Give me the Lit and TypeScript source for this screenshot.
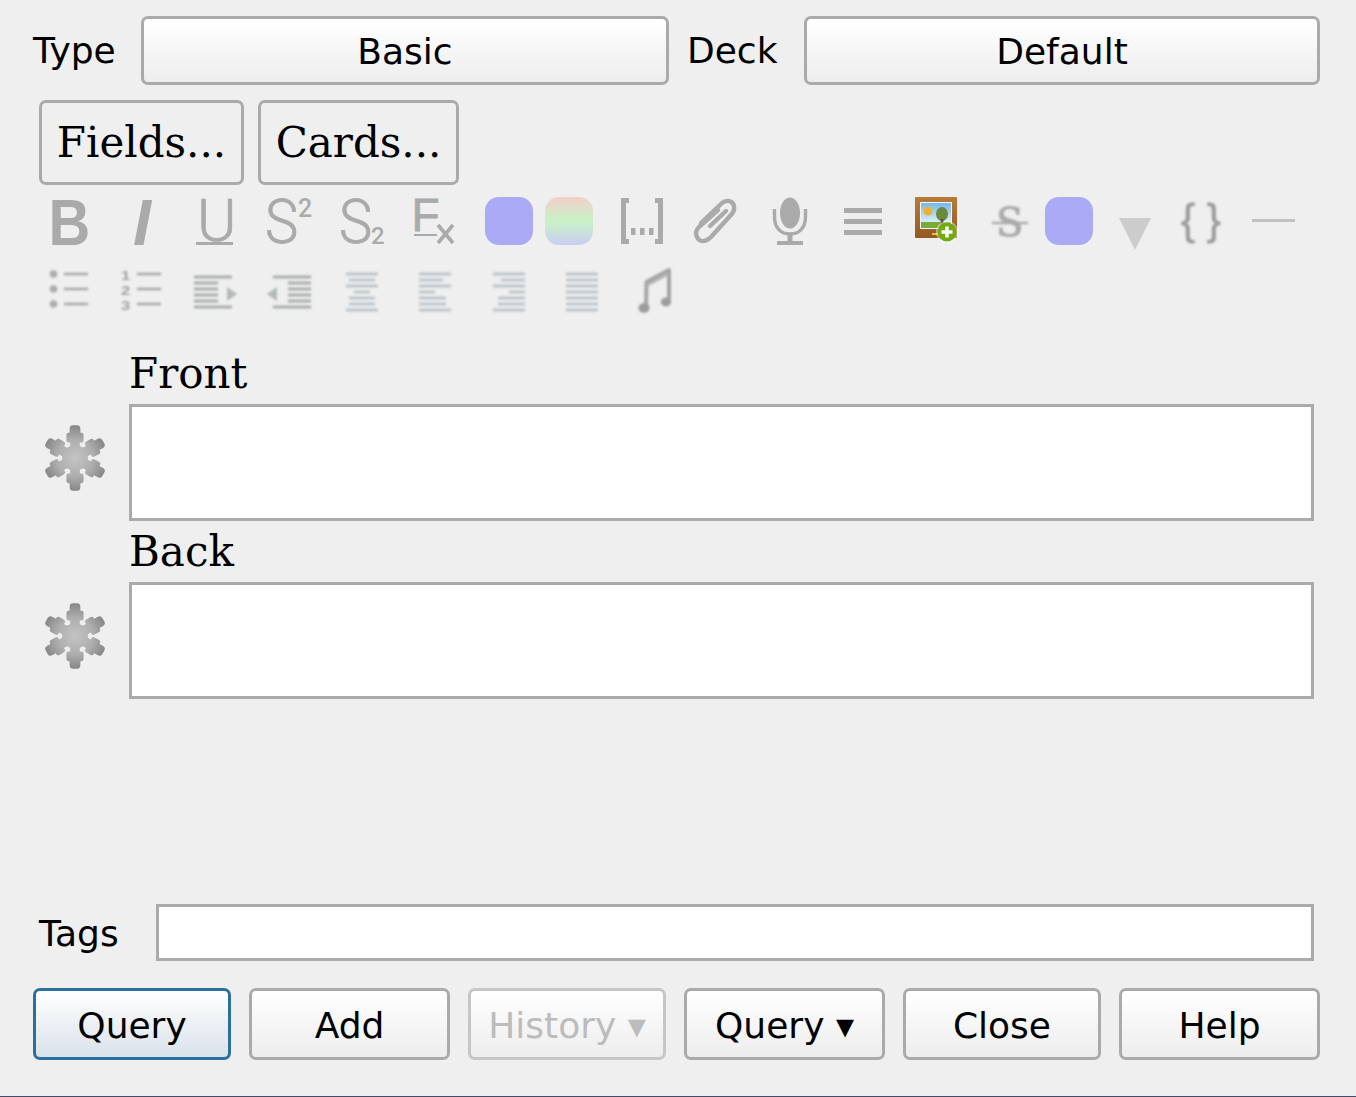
import { LitElement, html, css, svg } from "lit";
import { customElement } from "lit/decorators.js";

const lineRows = (rows: [number, number][], y0: number, step: number, sw = 3, color = "#bcc6cc") =>
  rows.map(([a, b], i) => svg`<line x1=${a} x2=${b} y1=${y0 + i * step} y2=${y0 + i * step} stroke=${color} stroke-width=${sw}/>`);

const glyph = (cls: string, x: number, y: number, t: string) => svg`<text class=${cls} x=${x} y=${y}>${t}</text>`;

const snowArm = (a: number) => svg`<path transform="rotate(${a} 32 32)" fill="url(#sf)"
  d="M27.5 32 V17.5 L25.5 17.5 Q24 17.5 24 15.5 V10.5 Q24 8.5 26 8.5 H27 V5 Q27 1.5 30 1.5 H34 Q37 1.5 37 5 V8.5 H38 Q40 8.5 40 10.5 V15.5 Q40 17.5 38.5 17.5 L36.5 17.5 V32Z"/>`;

const flake = html`<svg class="flake" width="64" height="68" viewBox="0 0 64 68">
  <defs><radialGradient id="sf" gradientUnits="userSpaceOnUse" cx="32" cy="32" r="31">
    <stop offset="0" stop-color="#c4c4c4"/><stop offset=".55" stop-color="#aeaeae"/><stop offset="1" stop-color="#858585"/></radialGradient></defs>
  <g transform="translate(32 34) scale(1.07) translate(-32 -32)" filter="blur(.7px)">
    <circle cx="32" cy="32" r="12" fill="url(#sf)"/>
    ${[0, 60, 120, 180, 240, 300].map(snowArm)}
  </g>
</svg>`;

type Tool = { cx: number; art: unknown; soft?: boolean };

const digit = (y: number, t: string) => svg`<text class="g num" transform="translate(3 ${y}) scale(1.3 1)">${t}</text>`;

const top: Tool[] = [
  { cx: 70, art: svg`<text class="g bold" transform="translate(2.5 48) scale(.89 1)">B</text>` },
  { cx: 143, art: glyph("g bolditalic", 14, 48, "I") },
  { cx: 216, art: svg`${glyph("g thin", 5, 44, "U")}<rect x="4" y="45" width="37" height="3" fill="#aaa"/>` },
  { cx: 289, art: svg`<text class="g thinS" transform="translate(0 46) scale(1 1.08)">S</text>${glyph("g sup", 33, 20, "2")}` },
  { cx: 362, art: svg`<text class="g thinS" transform="translate(1 46) scale(1 1.08)">S</text>${glyph("g sub", 33, 47, "2")}` },
  { cx: 434, art: svg`${glyph("g reg", 1.5, 34, "F")}<rect x="4" y="37" width="23" height="2" fill="#aaa"/>
    <path d="M28 28 L43 46 M43 28 L28 46" stroke="#aaa" stroke-width="3.6" fill="none"/>` },
  { cx: 509, art: svg`<rect width="48" height="48" rx="14" fill="#aaaaf5"/>` },
  { cx: 569, art: svg`<defs><linearGradient id="cg" x1="0" y1="0" x2="0" y2="1">
      <stop offset="0" stop-color="#f2cfcb"/><stop offset=".5" stop-color="#c9f2c6"/><stop offset="1" stop-color="#cacdf2"/></linearGradient></defs>
      <rect width="48" height="48" rx="14" fill="url(#cg)"/>` },
  { cx: 642, art: svg`<path d="M11 3.5 H5.5 V44.5 H11 M37 3.5 H42.5 V44.5 H37" stroke="#aaa" stroke-width="5" fill="none"/>
      <rect x="13" y="31" width="4.5" height="7" fill="#aaa"/><rect x="22" y="31" width="4.5" height="7" fill="#aaa"/><rect x="31" y="31" width="4.5" height="7" fill="#aaa"/>` },
  { cx: 715, art: svg`<path d="M10 25 L31 5 C36 1 42 3 43 8 C44 12 42 15 39 18 L20 39 C14 45 8 44 6 39 C4 35 5 32 8 29 L27 12 M35 13 L19 28" transform="translate(0 1)" stroke="#aaa" stroke-width="4.4" stroke-linecap="round" stroke-linejoin="round" fill="none"/>` },
  { cx: 790, art: svg`<ellipse cx="24" cy="16" rx="10" ry="15.5" fill="#aaa"/>
      <path d="M8.5 12 V20 C8.5 31 15 37 24 37 C33 37 39.5 31 39.5 20 V12" fill="none" stroke="#aaa" stroke-width="3.4"/>
      <rect x="21.5" y="37" width="5" height="7" fill="#aaa"/><rect x="11" y="44" width="26" height="4" fill="#aaa"/>` },
  { cx: 862, art: svg`<rect x="6" y="11" width="38" height="5" fill="#aaa"/><rect x="6" y="22" width="38" height="5" fill="#aaa"/><rect x="6" y="33" width="38" height="5" fill="#aaa"/>` },
  { cx: 936, art: svg`<defs><linearGradient id="sky" x1="0" y1="0" x2="0" y2="1"><stop offset="0" stop-color="#74b8ec"/><stop offset="1" stop-color="#d8eefa"/></linearGradient>
        <linearGradient id="wood" x1="0" y1="0" x2="0" y2="1"><stop offset="0" stop-color="#b77a38"/><stop offset="1" stop-color="#95591f"/></linearGradient></defs>
      <rect x="3" y="0" width="42" height="41" rx="1" fill="url(#wood)"/>
      <rect x="8" y="5" width="32" height="27" fill="#f2f6f8"/><rect x="9" y="6" width="30" height="19" fill="url(#sky)"/>
      <rect x="9" y="25" width="30" height="6" fill="#79ab3a"/>
      <circle cx="16" cy="14" r="4.6" fill="#f0b030"/><ellipse cx="30" cy="17" rx="6" ry="7" fill="#6a8a3c"/><rect x="28.8" y="22" width="2.6" height="7" fill="#6a4a2a"/>
      <rect x="20" y="36" width="7" height="2" fill="#e8c040"/>
      <circle cx="35" cy="35" r="11" fill="#fff" opacity=".45"/><circle cx="35" cy="35" r="9.5" fill="#72aa10"/>
      <path d="M35 29.5 V40.5 M29.5 35 H40.5" stroke="#fff" stroke-width="3.4"/>` },
  { cx: 1010, soft: true, art: svg`${glyph("g strike", 10, 39, "S")}<path d="M6 26 H42" stroke="#aaa" stroke-width="2.4"/>` },
  { cx: 1069, art: svg`<rect width="48" height="48" rx="14" fill="#aaaaf5"/>` },
  { cx: 1135, art: svg`<path d="M8 21 H40 L24 53Z" fill="#ccc"/>` },
  { cx: 1201, soft: true, art: svg`<text class="g brace" x="4" y="37">{ }</text>` },
  { cx: 1273, art: svg`<rect x="3" y="22" width="43" height="3" fill="#c2c2c2"/>` },
];

const soft = "#a9a9a9";
const bottom: Tool[] = [
  { cx: 69, soft: true, art: svg`${[6, 21, 36].map((y) => svg`<circle cx="8.5" cy=${y} r="3.8" fill="#adadad"/>`)}${lineRows([[19, 43], [19, 43], [19, 43]], 6, 15, 2.6, soft)}` },
  { cx: 142, soft: true, art: svg`${digit(12, "1")}${digit(27, "2")}${digit(42, "3")}${lineRows([[19, 43], [19, 43], [19, 43]], 6, 15, 2.6, soft)}` },
  { cx: 215, soft: true, art: svg`${lineRows([[3, 41], [3, 27], [3, 27], [3, 27], [3, 27], [3, 41]], 9, 6, 3, "#a9adad")}<path d="M36 19 L46 26 L36 33Z" fill="#b4b8b8"/>` },
  { cx: 289, soft: true, art: svg`${lineRows([[8, 46], [23, 46], [23, 46], [23, 46], [23, 46], [8, 46]], 9, 6, 3, "#a9adad")}<path d="M12 19 L2 26 L12 33Z" fill="#b4b8b8"/>` },
  { cx: 362, soft: true, art: lineRows([[8, 40], [11, 37], [8, 40], [16, 32], [11, 37], [11, 37], [8, 40]], 6, 6) },
  { cx: 435, soft: true, art: lineRows([[8, 40], [8, 32], [8, 40], [8, 24], [8, 35], [8, 35], [8, 40]], 6, 6) },
  { cx: 509, soft: true, art: lineRows([[8, 40], [16, 40], [8, 40], [24, 40], [13, 40], [13, 40], [8, 40]], 6, 6) },
  { cx: 582, soft: true, art: lineRows([[8, 40], [8, 40], [8, 40], [8, 40], [8, 40], [8, 40], [8, 40]], 6, 6) },
  { cx: 655, soft: true, art: svg`<path d="M15 38 L15.5 14 L38 2 L38 32" fill="none" stroke="#a4a4a4" stroke-width="4" stroke-linejoin="round"/>
      <ellipse cx="13" cy="40" rx="5.6" ry="4.8" fill="#9c9c9c"/><ellipse cx="35" cy="34" rx="5.2" ry="4.4" fill="#9c9c9c"/>
      <path d="M16 17 L37 6" stroke="#b4b4b4" stroke-width="3"/>` },
];

@customElement("app-root")
export class AppRoot extends LitElement {
  static styles = css`
    :host { display: block; width: 1356px; height: 1097px; background: #efefef; box-sizing: border-box; position: relative; overflow: hidden;
      font-family: "DejaVu Sans", sans-serif; font-size: 36px; color: #000; border-bottom: 1px solid #454a66; }
    .head { display: grid; grid-template-columns: 108px 528px 135px 516px; height: 69px; margin: 16px 0 0 33px; align-items: center; }
    .head .deck { padding-left: 18px; }
    .lbl { line-height: 1; padding-top: 1px; }
    .tags .lbl { padding-top: 3px; }
    .btn { box-sizing: border-box; border: 3px solid #aaa; border-radius: 7px; background: linear-gradient(#fff, #ededed); display: flex; align-items: center; justify-content: center; font: inherit; color: #000; height: 100%; white-space: pre; padding-top: 1px; }
    .row2 { display: flex; gap: 14px; margin: 15px 0 0 39px; height: 85px; font-family: "DejaVu Serif", serif; font-size: 42px; }
    .row2 .btn { background: #efefef; width: 205px; padding-top: 0; }
    .row2 .btn + .btn { width: 201px; }
    .tools { display: flex; height: 48px; }
    .tools.a { margin-top: 12px; }
    .tools.b { margin-top: 23px; }
    .tools svg { display: block; flex: none; overflow: visible; }
    .soft { filter: blur(.8px); }
    .g { font-family: "Liberation Sans", sans-serif; fill: #aaa; }
    .bold { font-weight: 700; font-size: 65px; }
    .bolditalic { font-weight: 700; font-style: italic; font-size: 65px; }
    .thin { font-family: Roboto, sans-serif; font-weight: 300; font-size: 60px; stroke: #aaa; stroke-width: .7px; }
    .thinS { font-family: Roboto, sans-serif; font-weight: 300; font-size: 56px; stroke: #aaa; stroke-width: .7px; }
    .reg { font-size: 46px; font-family: "Liberation Sans", sans-serif; stroke: #aaa; stroke-width: .8px; }
    .sup { font-family: Roboto, sans-serif; font-size: 25px; font-weight: 500; }
    .sub { font-family: Roboto, sans-serif; font-size: 24px; font-weight: 500; }
    .strike { font-family: "DejaVu Serif", serif; font-weight: 400; font-size: 40px; stroke: #aaa; stroke-width: 1px; }
    .brace { font-family: "Liberation Sans", sans-serif; font-size: 42px; fill: #9c9c9c; stroke: #9c9c9c; stroke-width: .8px; }
    .num { font-family: "Liberation Sans", sans-serif; font-size: 12.8px; font-weight: 700; fill: #a2a2a2; }
    .field-wrap { margin-top: 27px; display: grid; grid-template-columns: 96px 1185px; padding-left: 33px; }
    .fname { grid-column: 2; height: 61px; box-sizing: border-box; font-family: "DejaVu Serif", serif; font-size: 42px; line-height: 61px; }
    .ic { display: flex; align-items: center; justify-content: flex-start; padding-left: 10px; }
    .flake { display: block; transform: translateY(-5px); }
    .input { box-sizing: border-box; border: 3px solid #aaa; background: #fff; }
    .input.f { height: 117px; }
    .tags { margin: 205px 0 0 39px; display: grid; grid-template-columns: 117px 1158px; height: 57px; align-items: center; }
    .tags .input { height: 57px; }
    .actions { margin: 27px 0 0 33px; display: flex; gap: 18px; height: 72px; }
    .actions .btn { width: 198px; padding-top: 2px; }
    .actions .wide { width: 201px; }
    .default { border-color: #2b6f9e; background: linear-gradient(#fff, #dae2ea); }
    .off { border-color: #c6c6c6; color: #bcbcbc; }
  `;

  private row(tools: Tool[], cls: string) {
    let right = 0;
    return html`<div class="tools ${cls}">${tools.map((t) => {
      const left = t.cx - 24;
      const ml = left - right;
      right = left + 48;
      return html`<svg class=${t.soft ? "soft" : ""} style="margin-left:${ml}px" width="48" height="48" viewBox="0 0 48 48">${t.art}</svg>`;
    })}</div>`;
  }

  render() {
    return html`
      <div class="head">
        <div class="lbl">Type</div><div class="btn">Basic</div>
        <div class="lbl deck">Deck</div><div class="btn">Default</div>
      </div>
      <div class="row2"><div class="btn">Fields...</div><div class="btn">Cards...</div></div>
      ${this.row(top, "a")}
      ${this.row(bottom, "b")}
      <div class="field-wrap">
        <div class="fname">Front</div>
        <div class="ic">${flake}</div><div class="input f"></div>
        <div class="fname">Back</div>
        <div class="ic">${flake}</div><div class="input f"></div>
      </div>
      <div class="tags"><div class="lbl">Tags</div><div class="input"></div></div>
      <div class="actions">
        <div class="btn default">Query</div>
        <div class="btn wide">Add</div>
        <div class="btn off">History ▾</div>
        <div class="btn wide">Query ▾</div>
        <div class="btn">Close</div>
        <div class="btn wide">Help</div>
      </div>
    `;
  }
}
